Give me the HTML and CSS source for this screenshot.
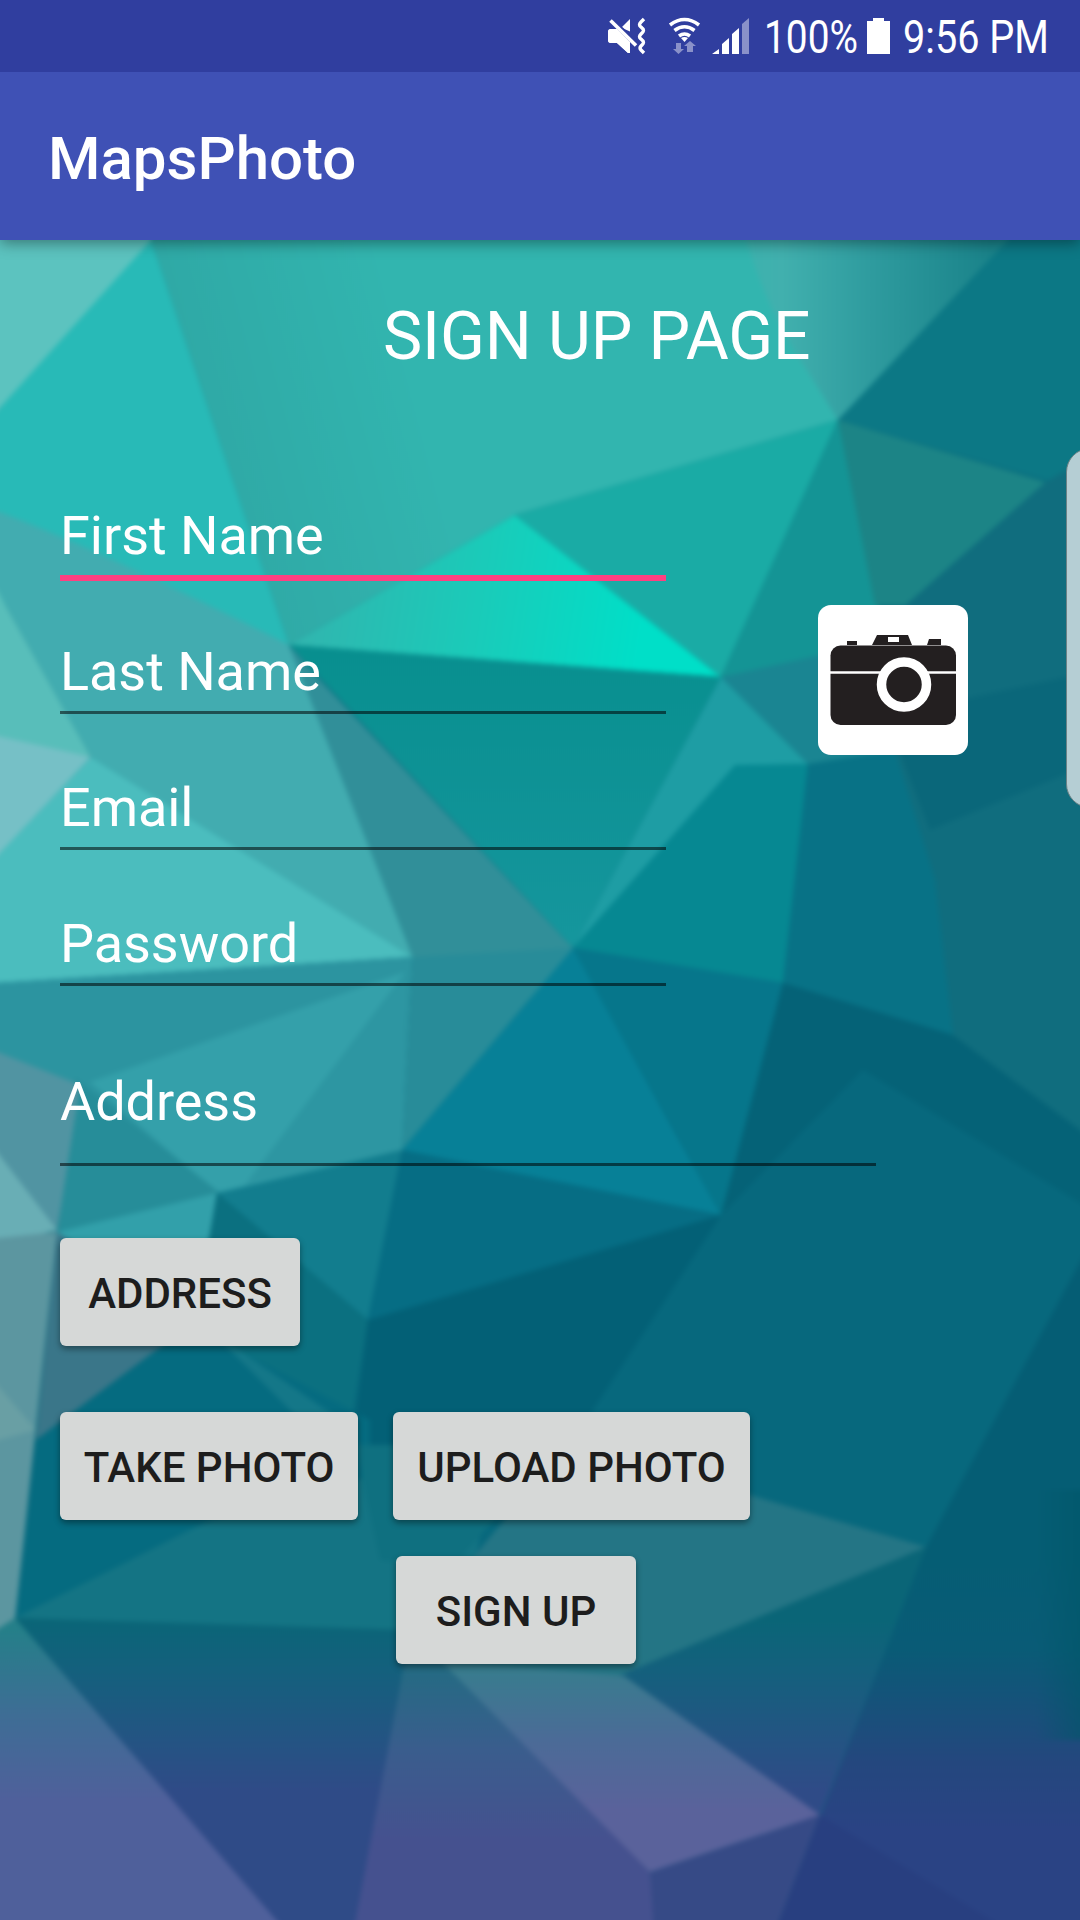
FILE: index.html
```html
<!DOCTYPE html>
<html lang="en">
<head>
<meta charset="utf-8">
<title>MapsPhoto</title>
<link rel="stylesheet" href="styles.css">
</head>
<body>
<div class="screen">
  <header class="status">
    <svg class="status-icons" width="1080" height="72" viewBox="0 0 1080 72">
      <g fill="#fff">
        <path d="M608 32q0-3 3-3h6l13 12v12l-2 0-11-10h-6q-3 0-3-3zM630 19v12.500l-8-3.500v-1z"/>
        <path d="M610 21l25.500 24" stroke="#303e9f" stroke-width="8"/>
        <path d="M608 32q0-3 3-3h6l13 13v11h-2l-11-10h-6q-3 0-3-3z"/>
        <path d="M610.500 20.500l25.500 25" stroke="#fff" stroke-width="3.600"/>
        <path d="M644 19l-3 3q-3 3 0 5l1 1q3 2 0 5l-1 1q-3 3 0 5l1 1q3 2 0 5l-1 1q-2 2 0 4l3 3" fill="none" stroke="#fff" stroke-width="3.400"/>
      </g>
      <g fill="none" stroke="#fff" stroke-width="3.6">
        <path d="M670 25q14.500-11 29 0"/>
        <path d="M674.500 30.500q10-7.500 20 0"/>
        <path d="M679 36q5.500-4 11 0"/>
      </g>
      <path d="M681 38q3.500-2 7 0l-3.500 4z" fill="#fff"/>
      <g fill="#8a91c9">
        <path d="M676 43h5v6h3l-5.500 5-5.500-5h3zM687 52h6v-6h3l-6-5-6 5h3z"/>
        <path d="M742 24l7-6v36h-7z"/>
      </g>
      <path d="M712 54l7-5v5zM722 54V44l7-6v16zM732 54V34l7-6v26z" fill="#fff"/>
      <path d="M867 21h6v-3h11v3h6v33h-23z" fill="#fff"/>
      <text x="764" y="53" textLength="94" lengthAdjust="spacingAndGlyphs">100%</text>
      <text x="903" y="53" textLength="146" lengthAdjust="spacingAndGlyphs">9:56 PM</text>
    </svg>
  </header>
  <div class="appbar">MapsPhoto</div>
  <main class="content">
    <svg class="backdrop" width="1080" height="1680" viewBox="0 240 1080 1680">
      <defs>
        <filter id="soft" x="0" y="0" width="1" height="1" color-interpolation-filters="sRGB"><feGaussianBlur stdDeviation="2.600"/></filter>
        <linearGradient id="shade" gradientUnits="userSpaceOnUse" x1="210" y1="450" x2="420" y2="395"><stop offset="0" stop-color="#2fa9a6"/><stop offset="1" stop-color="#32b5af"/></linearGradient>
        <linearGradient id="mint" gradientUnits="userSpaceOnUse" x1="310" y1="600" x2="640" y2="650"><stop offset="0" stop-color="#30b6af"/><stop offset=".5" stop-color="#1acbb9"/><stop offset="1" stop-color="#00dfc8"/></linearGradient>
        <linearGradient id="grey" gradientUnits="userSpaceOnUse" x1="745" y1="0" x2="990" y2="0"><stop offset="0" stop-color="#3cb2ae"/><stop offset=".15" stop-color="#41b0ae"/><stop offset=".5" stop-color="#2f9c9f"/><stop offset="1" stop-color="#1a838a"/></linearGradient>
        <linearGradient id="sea" gradientUnits="userSpaceOnUse" x1="0" y1="650" x2="0" y2="940"><stop offset="0" stop-color="#088f8f"/><stop offset="1" stop-color="#15969d"/></linearGradient>
        <linearGradient id="deep" gradientUnits="userSpaceOnUse" x1="0" y1="1620" x2="0" y2="1790"><stop offset="0" stop-color="#0a6577"/><stop offset=".3" stop-color="#14607d"/><stop offset="1" stop-color="#2f4b87"/></linearGradient>
        <linearGradient id="left" gradientUnits="userSpaceOnUse" x1="0" y1="1630" x2="0" y2="1800"><stop offset="0" stop-color="#257f89"/><stop offset=".5" stop-color="#3e6d95"/><stop offset="1" stop-color="#4f609b"/></linearGradient>
        <linearGradient id="violet" gradientUnits="userSpaceOnUse" x1="0" y1="1660" x2="0" y2="1840"><stop offset="0" stop-color="#226c82"/><stop offset=".5" stop-color="#3a5d8d"/><stop offset="1" stop-color="#45518f"/></linearGradient>
        <linearGradient id="lilac" gradientUnits="userSpaceOnUse" x1="0" y1="1670" x2="0" y2="1810"><stop offset="0" stop-color="#387c8e"/><stop offset=".5" stop-color="#4b6b97"/><stop offset="1" stop-color="#5a629b"/></linearGradient>
        <linearGradient id="edge" gradientUnits="userSpaceOnUse" x1="0" y1="1560" x2="0" y2="1830"><stop offset="0" stop-color="#055d74"/><stop offset=".33" stop-color="#095b76"/><stop offset=".75" stop-color="#24477e"/><stop offset="1" stop-color="#2a4384"/></linearGradient>
        <linearGradient id="rim" gradientUnits="userSpaceOnUse" x1="1035" y1="0" x2="1080" y2="0"><stop offset="0" stop-color="#005669" stop-opacity="0"/><stop offset="1" stop-color="#005669" stop-opacity=".6"/></linearGradient>
      </defs>
      <g filter="url(#soft)">
        <path d="M-20 200H1100V1950H-20z" fill="#07687d"/>
        <path d="M-20 220H165L151 243-20 430z" fill="#5cc3bf"/>
        <path d="M151 240L289 645-20 600V430z" fill="#28bab7"/>
        <path d="M-20 505Q80 540 289 645L413 957 91 757-20 560z" fill="#42acb0"/>
        <path d="M151 220H745L838 420 515 515 289 645 151 240z" fill="url(#shade)"/>
        <path d="M741 220H1030L1008 245 838 420 808 372Q760 300 741 220z" fill="url(#grey)"/>
        <path d="M1015 220H1100V500L1046 480 838 420 1008 240z" fill="#0c7885"/>
        <path d="M515 515L721 677 289 645z" fill="url(#mint)"/>
        <path d="M838 420L515 515 721 677z" fill="#1aaba5"/>
        <path d="M838 420L721 677 885 650 875 580z" fill="#149495"/>
        <path d="M838 420L1046 482 905 606H875z" fill="#1c8486"/>
        <path d="M1046 482L1100 450V1200L950 1035 885 740 890 620z" fill="#106d7e"/>
        <path d="M960 700L1100 670V760L930 830 895 740z" fill="#0a677a"/>
        <path d="M721 677L890 640 890 760 808 764z" fill="#1a8592"/>
        <path d="M289 645L721 677 573 948z" fill="url(#sea)"/>
        <path d="M721 677L808 764 735 766 573 948z" fill="#1e9da4"/>
        <path d="M735 765L808 764 783 983 573 948z" fill="#068892"/>
        <path d="M808 764L895 750 935 880 953 1035 783 983z" fill="#087286"/>
        <path d="M289 645L320 680 573 948 540 1000 413 957z" fill="#318f99"/>
        <path d="M-20 560L91 757-20 738z" fill="#58beba"/>
        <path d="M-20 732L91 757-20 875z" fill="#76c0c6"/>
        <path d="M91 757L413 957-20 984V874z" fill="#4bbdbe"/>
        <path d="M-20 984L413 957 402 1152 217 1193 75 1090-20 1050z" fill="#2c94a0"/>
        <path d="M405 972L90 1082 217 1193 402 1150z" fill="#34a0aa"/>
        <path d="M405 972L245 1185 402 1150z" fill="#2d96a2"/>
        <path d="M413 957L573 948 402 1150z" fill="#288c99"/>
        <path d="M573 948L402 1150 721 1215z" fill="#078097"/>
        <path d="M573 948L783 983 721 1215 675 1130z" fill="#06768b"/>
        <path d="M783 983L953 1035 1100 1145V1215L863 1070 721 1215z" fill="#056277"/>
        <path d="M863 1070L1100 1215V1260L600 1400 721 1215z" fill="#07687d"/>
        <path d="M75 1078L220 1193 57 1238z" fill="#268d99"/>
        <path d="M-20 1045L80 1085 57 1232-20 1220z" fill="#5194a2"/>
        <path d="M-20 1130L57 1230-20 1250z" fill="#69aeb5"/>
        <path d="M217 1193L57 1232 195 1325z" fill="#32a0aa"/>
        <path d="M217 1193L402 1150 368 1320z" fill="#127d8e"/>
        <path d="M402 1150L721 1215 368 1320z" fill="#066d84"/>
        <path d="M217 1193L368 1320 350 1430 195 1320z" fill="#0b7080"/>
        <path d="M368 1320L721 1215 560 1460H350z" fill="#036076"/>
        <path d="M57 1232L190 1325 36 1440z" fill="#3a7689"/>
        <path d="M-20 1240L57 1232 15 1622-20 1650z" fill="#5c96a0"/>
        <path d="M-20 1365L36 1430-20 1445z" fill="#699fa4"/>
        <path d="M190 1325L370 1420V1530L15 1620 36 1440z" fill="#056b80"/>
        <path d="M210 1330L355 1430 320 1440z" fill="#147788"/>
        <path d="M15 1618L210 1520 500 1440 475 1560 400 1635z" fill="#147484"/>
        <path d="M355 1445H560L450 1570 380 1560z" fill="#0f7080"/>
        <path d="M550 1465L750 1495 926 1547 624 1680 440 1675 475 1555z" fill="#247585"/>
        <path d="M926 1547L820 1815 800 1830 618 1676z" fill="url(#deep)"/>
        <path d="M1100 1225L926 1547 820 1817 780 1950H1100z" fill="url(#edge)"/>
        <path d="M1035 1490H1100V1740H1035z" fill="url(#rim)"/>
        <path d="M15 1618L410 1630 380 1950H285z" fill="url(#deep)"/>
        <path d="M-20 1640L15 1618 302 1950H-20z" fill="url(#left)"/>
        <path d="M405 1660H450L650 1872 660 1950H350z" fill="url(#violet)"/>
        <path d="M440 1660L624 1676 820 1815 650 1872z" fill="url(#lilac)"/>
        <path d="M650 1872L820 1815 768 1950H655z" fill="#364a86"/>
        <path d="M820 1815L1040 1950H768z" fill="#283f80"/>
      </g>
    </svg>
    <h1 class="title">SIGN UP PAGE</h1>
    <div class="details">
      <div class="fields">
        <div class="field active"><span>First Name</span></div>
        <div class="field"><span>Last Name</span></div>
        <div class="field"><span>Email</span></div>
        <div class="field"><span>Password</span></div>
      </div>
      <svg class="camera" width="150" height="150" viewBox="0 0 150 150">
        <rect width="150" height="150" rx="13" fill="#fff"/>
        <g fill="#231f20">
          <path d="M29 36h10v4H29zM54 40l5-10h31l4 10zM109 40l2-6h12v6z"/>
          <rect x="12.500" y="40.500" width="125.500" height="79.500" rx="10"/>
        </g>
        <path d="M70 32h11v5H70z" fill="#fff"/>
        <path d="M12 67.500h126" stroke="#fff" stroke-width="2.600"/>
        <circle cx="86" cy="79.500" r="22.500" fill="#231f20" stroke="#fff" stroke-width="9.500"/>
      </svg>
    </div>
    <div class="field address"><span>Address</span></div>
    <div class="actions">
      <button class="btn standard">ADDRESS</button>
      <div class="photos">
        <button class="btn take">TAKE PHOTO</button>
        <button class="btn upload">UPLOAD PHOTO</button>
      </div>
      <button class="btn standard submit">SIGN UP</button>
    </div>
    <div class="edge-handle"></div>
  </main>
</div>
</body>
</html>
```
FILE: styles.css
```css
* { box-sizing: border-box; }
body { margin: 0; font-family: Roboto, sans-serif; color: #fff; }
.screen { width: 1080px; height: 1920px; display: flex; flex-direction: column; overflow: hidden; }
.status { position: relative; z-index: 2; height: 72px; background: #303e9f; }
.status-icons { display: block; }
.status-icons text { font-size: 46px; fill: #fff; }
.appbar {
  position: relative;
  z-index: 1;
  height: 168px;
  padding: 5px 48px 0;
  background: #3f51b5;
  font-size: 60px;
  font-weight: 500;
  line-height: 163px;
  box-shadow: 0 3px 14px rgba(0, 0, 0, .4);
}
.content {
  position: relative;
  isolation: isolate;
  flex: 1;
  padding: 56px 60px 0;
  overflow: hidden;
}
.backdrop { position: absolute; z-index: -1; left: 0; top: 0; }
.title {
  margin: 0 0 127px;
  padding-left: 323px;
  font-size: 66px;
  font-weight: 400;
  line-height: 81px;
  letter-spacing: -0.1px;
}
.details { display: flex; gap: 152px; height: 566px; }
.fields { width: 606px; }
.camera { margin-top: 101px; }
.field { height: 136px; font-size: 54px; line-height: 64px; letter-spacing: -0.05px; }
.field span { display: block; height: 74px; border-bottom: 3px solid rgba(0, 0, 0, .54); }
.field.active span { height: 77px; border-bottom: 6px solid #ff4081; }
.field.address { width: 816px; height: 168px; }
.field.address span { height: 96px; }
.actions { display: flex; flex-direction: column; align-items: flex-start; }
.photos { display: flex; gap: 35px; margin: 66px 0 36px; }
.btn {
  height: 108px;
  padding: 3px 0 0;
  border: 0;
  border-radius: 6px;
  background: #d6d8d7;
  color: #1d1d1d;
  font: 500 42px Roboto, sans-serif;
  box-shadow: 0 3px 6px rgba(0, 0, 0, .4);
}
.standard { width: 240px; }
.take { width: 298px; }
.upload { width: 357px; }
.submit { margin-left: 336px; }
.edge-handle {
  position: absolute;
  left: 1066px;
  top: 208px;
  width: 60px;
  height: 360px;
  border: 1px solid #6b8286;
  border-radius: 24px;
  background: #b5ced4;
}
```
